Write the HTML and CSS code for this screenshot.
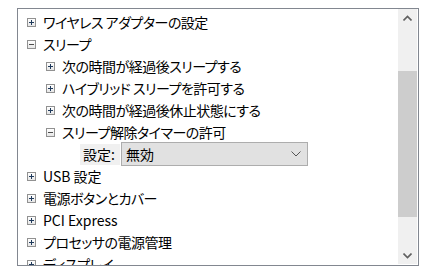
FILE: index.html
```html
<!DOCTYPE html>
<html lang="ja">
<head>
  <meta charset="UTF-8" />
  <title>電源オプション 詳細設定</title>
  <link rel="stylesheet" href="styles.css">
</head>
<body>
  <div class="tree-box">
    <div class="tree">
      <div class="row lv1"><span class="exp plus"></span><span class="label">ワイヤレス アダプターの設定</span></div>
      <div class="row lv1"><span class="exp minus"></span><span class="label">スリープ</span></div>
      <div class="row lv2"><span class="exp plus"></span><span class="label">次の時間が経過後スリープする</span></div>
      <div class="row lv2"><span class="exp plus"></span><span class="label">ハイブリッド スリープを許可する</span></div>
      <div class="row lv2"><span class="exp plus"></span><span class="label">次の時間が経過後休止状態にする</span></div>
      <div class="row lv2"><span class="exp minus"></span><span class="label">スリープ解除タイマーの許可</span></div>
      <div class="row setting">
        <span class="setting-name">設定:</span>
        <div class="select">
          <span>無効</span>
          <svg width="10" height="6" viewBox="0 0 10 6"><path d="M0.5 0.5 L5 5 L9.5 0.5" fill="none" stroke="#555" stroke-width="1"/></svg>
        </div>
      </div>
      <div class="row lv1"><span class="exp plus"></span><span class="label latin">USB 設定</span></div>
      <div class="row lv1"><span class="exp plus"></span><span class="label">電源ボタンとカバー</span></div>
      <div class="row lv1"><span class="exp plus"></span><span class="label latin">PCI Express</span></div>
      <div class="row lv1"><span class="exp plus"></span><span class="label">プロセッサの電源管理</span></div>
      <div class="row lv1"><span class="exp plus"></span><span class="label">ディスプレイ</span></div>
    </div>
    <div class="scrollbar">
      <div class="sb-btn">
        <svg width="9" height="6" viewBox="0 0 9 6"><path d="M0.5 5.5 L4.5 1.5 L8.5 5.5" fill="none" stroke="#606060" stroke-width="1.6"/></svg>
      </div>
      <div class="sb-track">
        <div class="sb-thumb"></div>
      </div>
      <div class="sb-btn">
        <svg width="9" height="6" viewBox="0 0 9 6"><path d="M0.5 0.5 L4.5 4.5 L8.5 0.5" fill="none" stroke="#606060" stroke-width="1.6"/></svg>
      </div>
    </div>
  </div>
</body>
</html>
```
FILE: styles.css
```css
body { margin: 0; background: #fff; font-family: "Noto Sans CJK JP", "Noto Sans", sans-serif; font-size: 14px; color: #000; }
.tree-box { display: flex; margin: 8px 0 0 17px; width: 400px; height: 256px; border: 1px solid #828790; overflow: hidden; }
.tree { flex: 1; padding-top: 2px; overflow: hidden; }
.row { display: flex; align-items: center; height: 22px; white-space: nowrap; font-feature-settings: "palt"; }
.row.lv1 { padding-left: 9px; }
.row.lv2 { padding-left: 28px; }
.label { letter-spacing: -0.5px; }
.label.latin { letter-spacing: 0; }
.exp { position: relative; flex: none; width: 7px; height: 7px; margin-right: 7px; border: 1px solid #919191; background: linear-gradient(#fff, #e6e6e6); }
.exp::before, .plus::after { content: ""; position: absolute; background: #1e395b; }
.exp::before { left: 1px; top: 3px; width: 5px; height: 1px; }
.plus::after { left: 3px; top: 1px; width: 1px; height: 5px; }
.minus::before { background: #4d4d4d; }
.setting { padding-left: 62px; }
.setting-name { display: flex; align-items: center; width: 37px; height: 21px; padding-left: 3px; background: #f0f0f0; }
.select { display: flex; align-items: center; justify-content: space-between; box-sizing: border-box; width: 187px; height: 24px; margin-left: 1px; padding: 0 6px 0 4px; border: 1px solid #adadad; background: #e1e1e1; }
.scrollbar { display: flex; flex-direction: column; width: 19px; margin: 0 1px 1px 0; background: #f0f0f0; }
.sb-btn { display: flex; align-items: center; justify-content: center; height: 17px; }
.sb-track { flex: 1; }
.sb-thumb { margin-top: 45px; height: 146px; background: #cdcdcd; }
```
